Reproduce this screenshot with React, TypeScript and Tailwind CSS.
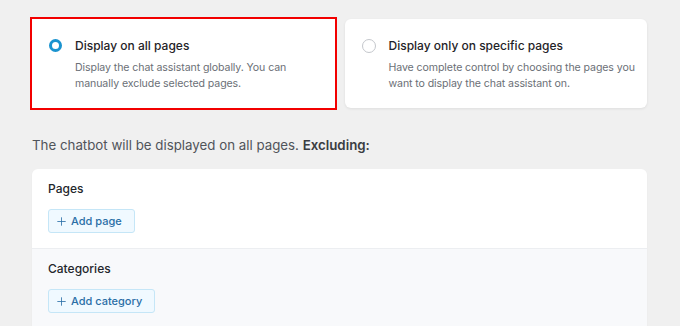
import React from "react";
import { Plus } from "lucide-react";

function Radio({ checked }: { checked: boolean }) {
  return checked ? (
    <span className="mt-[1px] h-[13px] w-[13px] shrink-0 rounded-full border-[3.5px] border-[#1a93cf] bg-white" />
  ) : (
    <span className="mt-[1px] h-[14px] w-[14px] shrink-0 rounded-full border border-[#c4c7cc] bg-white" />
  );
}

function Option({ checked, title, desc }: { checked: boolean; title: string; desc: string }) {
  return (
    <div
      className={`flex gap-[13px] rounded-md bg-white pl-[17px] pr-2 pt-[19px] h-[89px] ${
        checked ? "outline-2 outline-[#f20000] rounded-none" : "shadow-[0_1px_3px_rgba(0,0,0,0.08)]"
      }`}
    >
      <Radio checked={checked} />
      <div>
        <p className="text-[12px] font-medium leading-[16px] text-[#1f2328]">{title}</p>
        <p className="mt-[6px] text-[10.6px] leading-[16px] tracking-[-0.1px] text-[#6b6f76]">{desc}</p>
      </div>
    </div>
  );
}

function Section({ label, button, muted }: { label: string; button: string; muted?: boolean }) {
  return (
    <div className={`px-4 pt-[12px] h-[79px] ${muted ? "bg-[#f8f9fb]" : "bg-white"}`}>
      <p className="text-[12px] font-medium leading-[16px] text-[#23262b]">{label}</p>
      <button className="mt-[12px] flex h-[24px] items-center gap-[3px] rounded-[3px] border border-[#c5e6f7] bg-[#f0f9ff] pl-[6px] pr-[12px] text-[11px] font-medium text-[#2a6ea6]">
        <Plus size={13} strokeWidth={1.5} />
        {button}
      </button>
    </div>
  );
}

export default function App() {
  return (
    <div className="h-[326px] w-[680px] overflow-hidden bg-[#f0f0f0] font-['Inter',sans-serif]">
      <div className="pl-8 pr-[33px] pt-[19px]">
        <div className="grid grid-cols-2 gap-[10px]">
          <Option
            checked
            title="Display on all pages"
            desc="Display the chat assistant globally. You can manually exclude selected pages."
          />
          <Option
            checked={false}
            title="Display only on specific pages"
            desc="Have complete control by choosing the pages you want to display the chat assistant on."
          />
        </div>

        <p className="mt-[27px] text-[13.3px] leading-[20px] text-[#50545a]">
          The chatbot will be displayed on all pages. <span className="font-semibold text-[#3a3d42]">Excluding:</span>
        </p>

        <div className="mt-[14px] overflow-hidden rounded-t-md border-b border-[#e6e8eb] shadow-[0_1px_2px_rgba(0,0,0,0.04)]">
          <Section label="Pages" button="Add page" />
          <div className="h-px bg-[#eceef1]" />
          <Section label="Categories" button="Add category" muted />
        </div>
      </div>
    </div>
  );
}
